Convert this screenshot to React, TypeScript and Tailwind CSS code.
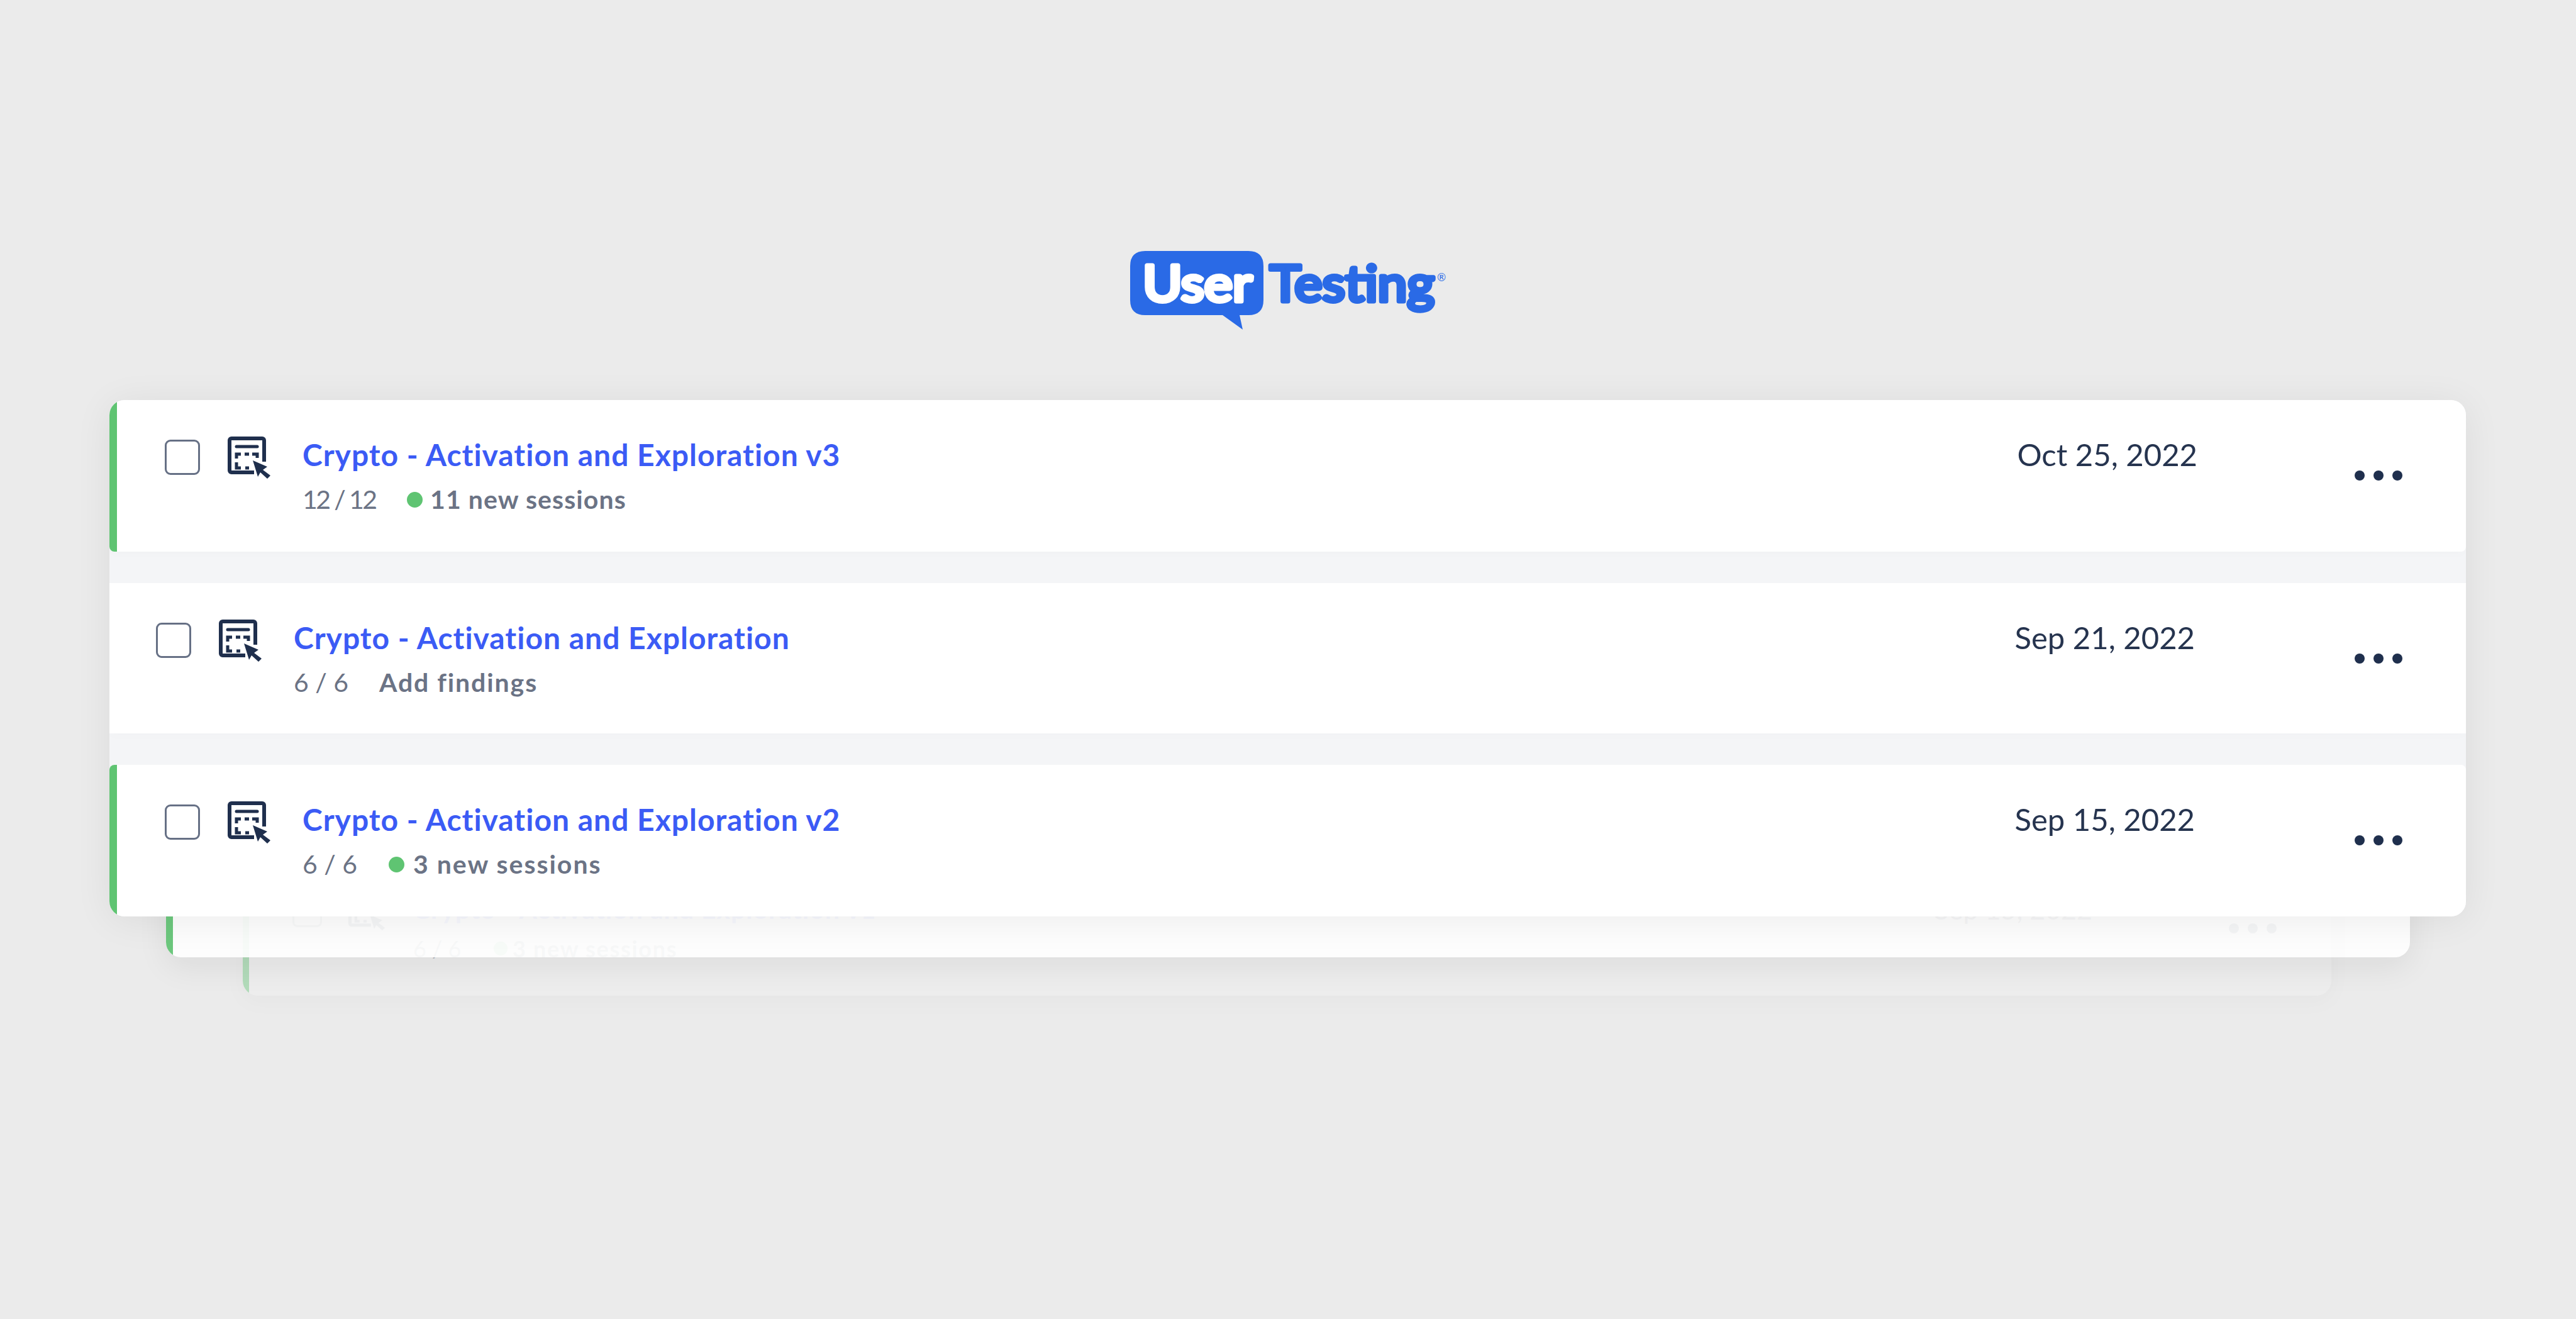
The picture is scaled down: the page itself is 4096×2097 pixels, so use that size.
const font = { fontFamily: "Lato, 'Liberation Sans', sans-serif" };

function Logo() {
  return (
    <svg width="502" height="126" viewBox="0 0 502 126" className="block">
      <path
        d="M24 0H188Q212 0 212 24V78Q212 102 188 102H174L179 125L147 102H24Q0 102 0 78V24Q0 0 24 0Z"
        fill="#2a6ae6"
      />
      <text
        x="20"
        y="80"
        fontFamily="Lato"
        fontWeight="400"
        fontSize="80"
        textLength="174"
        lengthAdjust="spacingAndGlyphs"
        fill="#fff"
        stroke="#fff"
        strokeWidth="7"
        strokeLinejoin="round"
      >
        User
      </text>
      <text
        x="222"
        y="80"
        fontFamily="Lato"
        fontWeight="400"
        fontSize="80"
        textLength="262"
        lengthAdjust="spacingAndGlyphs"
        fill="#2a6ae6"
        stroke="#2a6ae6"
        strokeWidth="7"
        strokeLinejoin="round"
      >
        Testing
      </text>
      <text x="488" y="48" fontFamily="Lato" fontSize="17" fill="#2a6ae6">
        ®
      </text>
    </svg>
  );
}

function SessionIcon({ className }: { className: string }) {
  return (
    <svg viewBox="0 0 70 70" className={className} fill="none" stroke="#1f2f4d">
      <path strokeWidth="6" d="M43 58H7a3 3 0 0 1-3-3V7a3 3 0 0 1 3-3H56a3 3 0 0 1 3 3V41" />
      <path strokeWidth="5" strokeLinecap="round" d="M15 17H48" />
      <path strokeWidth="5" d="M15 36V29H22M28 29H35M40 29H48V35M15 42V51H22M29 51H35" />
      <path fill="#1f2f4d" stroke="none" d="M41 39L64 49L57 54L69 63L64 68L53 58L49 65Z" />
    </svg>
  );
}

function Dots({ className }: { className: string }) {
  return (
    <div className={`flex gap-[14px] ${className}`}>
      <span className="w-4 h-4 rounded-full bg-[#1f2f4d]" />
      <span className="w-4 h-4 rounded-full bg-[#1f2f4d]" />
      <span className="w-4 h-4 rounded-full bg-[#1f2f4d]" />
    </div>
  );
}

interface RowProps {
  title: string;
  count: string;
  note: string;
  isNew: boolean;
  date: string;
  rowClass: string;
  bodyClass: string;
  dateClass: string;
  countClass: string;
  dotClass: string;
  noteClass: string;
}

function Row(props: RowProps) {
  return (
    <div className={`flex bg-white overflow-hidden shadow-[0_6px_14px_rgba(0,0,0,0.012)] ${props.rowClass}`}>
      {props.isNew && <div className="w-[12px] shrink-0 bg-[#5fc472]" />}
      <div className={`flex flex-1 items-start ${props.bodyClass}`}>
        <div className="w-[56px] h-[56px] shrink-0 rounded-[9px] border-[3px] border-[#667085] mt-[63px] mr-[43px]" />
        <SessionIcon className="w-[70px] h-[70px] shrink-0 mt-[57px] mr-[50px]" />
        <div className="flex-1 pt-[58px]">
          <div className="text-[48px] leading-[58px] font-bold text-[#3b5bf5] tracking-[1px]">{props.title}</div>
          <div className="flex items-center text-[41px] leading-[50px] mt-[17px] text-[#6b7385]">
            <span className={props.countClass}>{props.count}</span>
            {props.isNew && <span className={`w-[25px] h-[25px] rounded-full bg-[#5fc472] ${props.dotClass}`} />}
            <span className={`font-bold ${props.noteClass}`}>{props.note}</span>
          </div>
        </div>
        <div className={`text-[49px] leading-[58px] text-[#26344f] pt-[57px] ${props.dateClass}`}>{props.date}</div>
        <Dots className="mt-[112px] ml-auto" />
      </div>
    </div>
  );
}

function GhostCard() {
  return (
    <div className="absolute left-[212px] right-[214px] bottom-[-126px] h-[240px] flex overflow-hidden rounded-[24px] bg-[#f2f2f2] opacity-40 shadow-[0_8px_30px_rgba(0,0,0,0.05)]">
      <div className="w-[10px] shrink-0 bg-[#5fc472]" />
      <div className="flex-1 flex items-start pl-[69px] pr-[87px]">
        <div className="w-[47px] h-[47px] shrink-0 rounded-[8px] border-[3px] border-[#667085] mt-[84px]" />
        <SessionIcon className="w-[60px] h-[60px] shrink-0 ml-[41px] mt-[78px]" />
        <div className="flex-1 pl-[44px] pt-[78px]">
          <div className="text-[41px] leading-[50px] font-bold text-[#3b5bf5] tracking-[1px]">Crypto - Activation and Exploration v1</div>
          <div className="flex items-center text-[36px] leading-[44px] mt-[15px] text-[#6b7385]">
            <span className="w-[128px]">6 / 6</span>
            <span className="w-[22px] h-[22px] rounded-full bg-[#5fc472] mr-[8px]" />
            <span className="font-bold tracking-[1.7px]">3 new sessions</span>
          </div>
        </div>
        <div className="text-[43px] leading-[50px] text-[#26344f] pt-[78px] mr-[217px]">Sep 15, 2022</div>
        <Dots className="mt-[125px]" />
      </div>
    </div>
  );
}

function BackCard() {
  return (
    <div className="absolute left-[90px] right-[89px] bottom-[-65px] h-[200px] flex overflow-hidden rounded-[24px] bg-white opacity-90 shadow-[0_16px_50px_rgba(0,0,0,0.07)]">
      <div className="w-[11px] shrink-0 bg-[#5fc472]" />
    </div>
  );
}

export default function App() {
  return (
    <div className="min-h-screen bg-[#ebebeb] pt-[399px] pb-[40px]" style={font}>
      <div className="flex justify-center">
        <Logo />
      </div>
      <div className="relative mt-[111px] ml-[174px] mr-[175px]">
        <GhostCard />
        <BackCard />
        <div className="absolute inset-0 rounded-[24px] shadow-[0_6px_60px_rgba(0,0,0,0.07)]" />
        <div className="relative flex flex-col gap-[50px] rounded-[24px] overflow-hidden bg-[#f4f5f7]">
          <Row
            title="Crypto - Activation and Exploration v3"
            count="12 / 12"
            note="11 new sessions"
            isNew
            date="Oct 25, 2022"
            rowClass="h-[241px] rounded-b-[8px]"
            bodyClass="pl-[76px] pr-[101px]"
            dateClass="mr-[250px]"
            countClass="w-[166px] tracking-[-2.6px]"
            dotClass="mr-[12px]"
            noteClass="tracking-[1.1px]"
          />
          <Row
            title="Crypto - Activation and Exploration"
            count="6 / 6"
            note="Add findings"
            isNew={false}
            date="Sep 21, 2022"
            rowClass="h-[239px]"
            bodyClass="pl-[74px] pr-[101px]"
            dateClass="mr-[254px]"
            countClass="w-[136px]"
            dotClass=""
            noteClass="tracking-[1.9px]"
          />
          <Row
            title="Crypto - Activation and Exploration v2"
            count="6 / 6"
            note="3 new sessions"
            isNew
            date="Sep 15, 2022"
            rowClass="h-[241px] rounded-t-[8px]"
            bodyClass="pl-[76px] pr-[101px]"
            dateClass="mr-[254px]"
            countClass="w-[137px]"
            dotClass="mr-[14px]"
            noteClass="tracking-[2px]"
          />
        </div>
      </div>
    </div>
  );
}
